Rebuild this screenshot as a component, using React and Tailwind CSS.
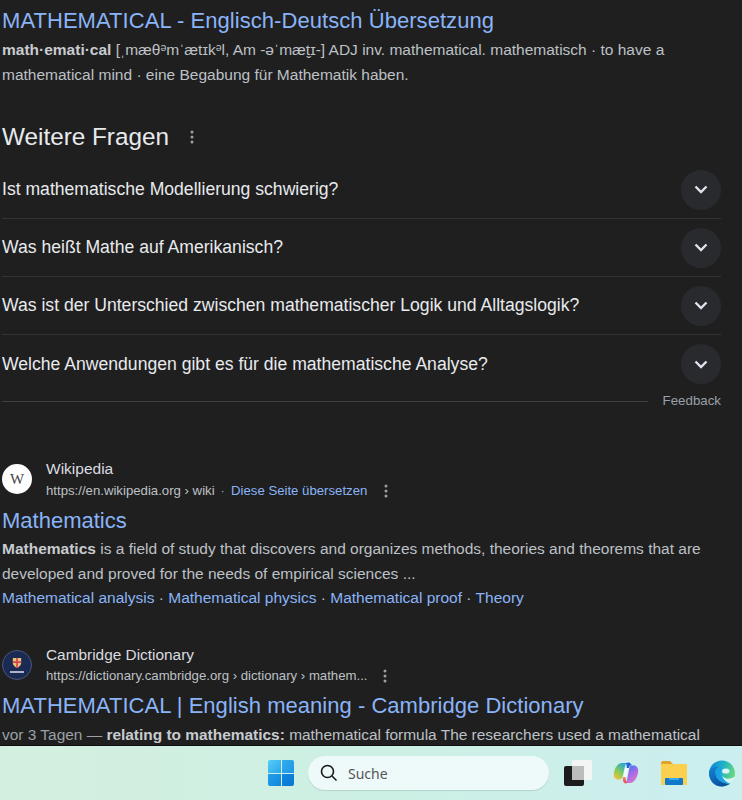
import React from "react";

function Dots({ className = "" }) {
  return (
    <svg width="4" height="14" viewBox="0 0 4 14" className={className} fill="currentColor">
      <circle cx="2" cy="2" r="1.5" />
      <circle cx="2" cy="7" r="1.5" />
      <circle cx="2" cy="12" r="1.5" />
    </svg>
  );
}

function Row({ text, last }) {
  return (
    <div className={`flex h-[58px] items-center justify-between ${last ? "" : "border-b border-[#313335]"}`}>
      <div className="text-[17.6px] text-[#e8eaed]">{text}</div>
      <div className="flex h-10 w-10 items-center justify-center rounded-full bg-[#292a2d]">
        <svg width="14" height="9" viewBox="0 0 14 9" fill="none" stroke="#dfe1ec" strokeWidth="2.4">
          <path d="M1.5 1.5 L7 7 L12.5 1.5" />
        </svg>
      </div>
    </div>
  );
}

function WinLogo() {
  return (
    <div className="grid h-[26px] w-[26px] grid-cols-2 gap-[1px]">
      <div className="rounded-tl-[2px] bg-gradient-to-br from-[#55cdf8] to-[#2aa5ea]" />
      <div className="rounded-tr-[2px] bg-gradient-to-br from-[#33aeee] to-[#1e95e4]" />
      <div className="rounded-bl-[2px] bg-gradient-to-br from-[#22a0ea] to-[#0f86dc]" />
      <div className="rounded-br-[2px] bg-gradient-to-br from-[#0f88de] to-[#0a75d0]" />
    </div>
  );
}

function Copilot() {
  return (
    <svg width="26" height="26" viewBox="0 0 26 26">
      <defs>
        <linearGradient id="cl" x1="0.2" y1="1" x2="0.8" y2="0">
          <stop offset="0" stopColor="#f5c23a" />
          <stop offset="0.45" stopColor="#7ccb5f" />
          <stop offset="1" stopColor="#1f9fe8" />
        </linearGradient>
        <linearGradient id="cr" x1="0.2" y1="0" x2="0.8" y2="1">
          <stop offset="0" stopColor="#2f7df0" />
          <stop offset="0.5" stopColor="#a86ae6" />
          <stop offset="1" stopColor="#e37ac8" />
        </linearGradient>
        <linearGradient id="cm" x1="0" y1="0" x2="0" y2="1">
          <stop offset="0" stopColor="#f6a06a" />
          <stop offset="1" stopColor="#e8434f" />
        </linearGradient>
      </defs>
      <path d="M9 3 H15 C13 3 12.4 4.5 12 6 L9.5 17 C9.2 18.5 8 19.5 6.5 19.5 H5 C2.5 19.5 0.5 17 0.8 14 C1.2 9 4 3 9 3z" fill="url(#cl)" />
      <path d="M17 23 H11 C13 23 13.6 21.5 14 20 L16.5 7.5 C16.8 6 18 5.5 19.5 5.5 H21 C23.5 5.5 25.5 8 25.2 11 C24.8 16 22 23 17 23z" fill="url(#cr)" />
      <path d="M13 3 C15 2 17.5 2 19 5.5 C17 5 16.5 6 16 8 L14 8 C13.5 6 13.5 4.5 13 3z" fill="#2563dc" />
      <path d="M10 18 L12 15 C12.5 18 13 21 14 23 C12.5 24 11 23 10 21z" fill="url(#cm)" />
      <path d="M12 8 L15.5 8 L13.2 17 L10.5 17z" fill="#f5f8fb" />
    </svg>
  );
}

function Edge() {
  return (
    <svg width="26" height="27" viewBox="0 0 26 27">
      <defs>
        <linearGradient id="eg" x1="0.1" y1="0.3" x2="1" y2="0.6">
          <stop offset="0" stopColor="#1590d8" />
          <stop offset="0.45" stopColor="#22b6c4" />
          <stop offset="1" stopColor="#74dd74" />
        </linearGradient>
        <linearGradient id="eb" x1="0" y1="0" x2="0.6" y2="1">
          <stop offset="0" stopColor="#1686d8" />
          <stop offset="1" stopColor="#0a4f9c" />
        </linearGradient>
      </defs>
      <circle cx="13" cy="13.5" r="13" fill="url(#eg)" />
      <path d="M0.2 11 C2 7 7 5.5 10 7 C6 8 5 12 7 16 C9 21 15 24 21 23.6 C17 27 9 28 4 23 C1 20 -0.3 15 0.2 11z" fill="url(#eb)" />
      <path d="M7 12 C8 8 11.5 6.5 14 7.5 C11.5 9.5 11 13 12.5 16 C13.8 19 17 21.5 21 23.6 C15 24 9 21 7 16 C6.8 14.5 6.8 13 7 12z" fill="#1b9fe6" />
      <ellipse cx="16.8" cy="11" rx="3.8" ry="2.6" fill="#d8f4f4" />
      <path d="M13 15.5 C15 19 20 20 26 16.5 C25.6 19 23.5 22.5 21 23.6 C17 22 14 19.5 13 15.5z" fill="#d8f4f4" />
    </svg>
  );
}

export default function App() {
  return (
    <div className="flex h-[800px] w-[742px] flex-col overflow-hidden bg-[#1f1f1f] font-['Liberation_Sans',Arial,sans-serif]">
      <main className="min-h-0 flex-1 overflow-hidden border-b border-[#0f0f0f] pl-[2px] pr-[21px] pt-[7px]">
        <div className="text-[22px] leading-[28px] tracking-[0.05px] text-[#8ab4f8]">MATHEMATICAL - Englisch-Deutsch Übersetzung</div>
        <p className="mt-[2px] w-[700px] text-[15.5px] leading-[25px] text-[#bdc1c6]">
          <b className="text-[#c8cbd0]">math·emati·cal</b> [ˌmæθᵊmˈætɪkᵊl, Am -əˈmæt̬ɪ-] ADJ inv. mathematical. mathematisch · to have a mathematical mind · eine Begabung für Mathematik haben.
        </p>

        <div className="mt-[34px] flex h-[32px] items-center gap-[21px] text-[#e8eaed]">
          <h2 className="text-[24.3px] leading-[32px] font-normal">Weitere Fragen</h2>
          <Dots className="text-[#9aa0a6]" />
        </div>
        <div className="mt-[8px]">
          <Row text="Ist mathematische Modellierung schwierig?" />
          <Row text="Was heißt Mathe auf Amerikanisch?" />
          <Row text="Was ist der Unterschied zwischen mathematischer Logik und Alltagslogik?" />
          <Row text="Welche Anwendungen gibt es für die mathematische Analyse?" last />
        </div>
        <div className="flex h-[16px] items-center gap-[15px]">
          <div className="h-px flex-1 bg-[#3c4043]" />
          <div className="text-[13.3px] text-[#9aa0a6]">Feedback</div>
        </div>

        <section className="mt-[48px]">
          <div className="flex items-center gap-[14px]">
            <div className="flex h-[30px] w-[30px] items-center justify-center rounded-full bg-white font-['Liberation_Serif',serif] text-[15px] text-[#444]">W</div>
            <div>
              <div className="text-[15.5px] leading-[24px] text-[#dadce0]">Wikipedia</div>
              <div className="flex items-center text-[13.2px] leading-[20px] text-[#bdc1c6]">
                <span>https://en.wikipedia.org › wiki</span>
                <span className="mx-[6px] text-[#9aa0a6]">·</span>
                <span className="text-[#8ab4f8]">Diese Seite übersetzen</span>
                <Dots className="ml-[17px] text-[#9aa0a6]" />
              </div>
            </div>
          </div>
          <div className="mt-[5px] text-[22px] leading-[30px] text-[#8ab4f8]">Mathematics</div>
          <p className="mt-[1px] text-[15.5px] leading-[24.5px] text-[#bdc1c6]">
            <b className="text-[#c8cbd0]">Mathematics</b> is a field of study that discovers and organizes methods, theories and theorems that are developed and proved for the needs of empirical sciences ...
          </p>
          <div className="text-[15.5px] leading-[24px] text-[#8ab4f8]">
            Mathematical analysis <span className="text-[#bdc1c6]">·</span> Mathematical physics <span className="text-[#bdc1c6]">·</span> Mathematical proof <span className="text-[#bdc1c6]">·</span> Theory
          </div>
        </section>

        <section className="mt-[33px]">
          <div className="flex items-center gap-[14px]">
            <div className="flex h-[30px] w-[30px] flex-col items-center justify-center rounded-full border border-[#4a5878] bg-[#1b2a52]">
              <svg width="10" height="12" viewBox="0 0 12 14">
                <path d="M1 1 h10 v6 c0 3 -3 5 -5 6 c-2 -1 -5 -3 -5 -6z" fill="#e8c27a" />
                <path d="M5 1 h2 v12 h-2z M1 5 h10 v2 h-10z" fill="#d9434e" />
              </svg>
              <div className="mt-[2px] h-[2px] w-[14px] bg-[#aab4cc]" />
            </div>
            <div>
              <div className="text-[15.4px] leading-[23px] text-[#dadce0]">Cambridge Dictionary</div>
              <div className="flex items-center text-[13.2px] leading-[20px] text-[#bdc1c6]">
                <span>https://dictionary.cambridge.org › dictionary › mathem...</span>
                <Dots className="ml-[15px] text-[#9aa0a6]" />
              </div>
            </div>
          </div>
          <div className="mt-[5px] text-[22px] leading-[30px] tracking-[0.03px] text-[#8ab4f8]">MATHEMATICAL | English meaning - Cambridge Dictionary</div>
          <p className="mt-[1px] whitespace-nowrap text-[15.45px] leading-[25px] text-[#9aa0a6]">
            vor 3 Tagen — <b className="text-[#c8cbd0]">relating to mathematics:</b><span className="text-[#bdc1c6]"> mathematical formula The researchers used a mathematical</span>
          </p>
        </section>
      </main>

      <footer className="flex h-[54px] shrink-0 items-center bg-gradient-to-r from-[#d3efdf] via-[#cdf0e4] to-[#cbeef0] pl-[268px]">
        <WinLogo />
        <div className="ml-[14px] flex h-[34px] w-[241px] items-center rounded-full bg-[#eef9fa] pl-[12px] shadow-[0_1px_1px_rgba(0,0,0,0.12)]">
          <svg width="18" height="18" viewBox="0 0 18 18" fill="none" stroke="#1a1a1a" strokeWidth="1.6">
            <circle cx="7.5" cy="7.5" r="6" />
            <path d="M12 12 L16.5 16.5" />
          </svg>
          <span className="ml-[10px] font-['Noto_Sans',sans-serif] text-[14px] text-[#555]">Suche</span>
        </div>
        <div className="relative ml-[15px] h-[26px] w-[28px]">
          <div className="absolute right-0 top-0 h-[20px] w-[20px] rounded-[2px] bg-[#f3f5f5]" />
          <div className="absolute bottom-0 left-0 h-[20px] w-[20px] rounded-[2px] bg-[#1c1c1c]" />
          <div className="absolute left-[8px] top-[6px] h-[14px] w-[12px] bg-[#bbbcbc]" />
        </div>
        <div className="ml-[21px]"><Copilot /></div>
        <svg className="ml-[22px]" width="26" height="24" viewBox="0 0 26 24">
          <path d="M0 2 a2 2 0 0 1 2 -2 h7 l3 3 h-12z" fill="#e0a526" />
          <rect x="0" y="3" width="26" height="21" fill="#fcd04f" />
          <rect x="4" y="17" width="18" height="7" rx="1" fill="#0f78c8" />
          <rect x="8" y="17" width="10" height="2" fill="#3ba7ea" />
        </svg>
        <div className="ml-[22px]"><Edge /></div>
      </footer>
    </div>
  );
}
